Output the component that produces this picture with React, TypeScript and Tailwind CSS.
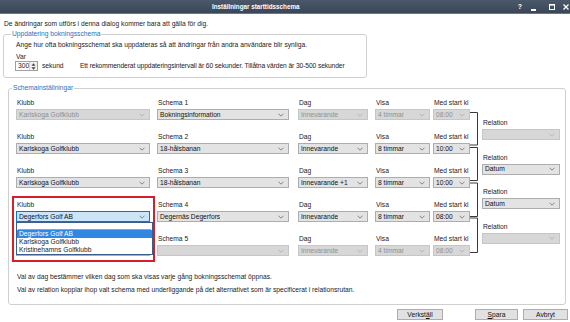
import React from "react";

type SelProps = { value?: string; w: string; disabled?: boolean; focused?: boolean };

function Chevron({ color }: { color: string }) {
  return (
    <svg width="6" height="4" viewBox="0 0 6 4" className="shrink-0">
      <path d="M0.5 0.7 L3 3.2 L5.5 0.7" fill="none" stroke={color} strokeWidth="0.7" />
    </svg>
  );
}

function Select({ value = "", w, disabled, focused }: SelProps) {
  const cls = disabled
    ? "bg-[#d7d7d7] border-[#c6c6c6] text-[#909090]"
    : focused
    ? "bg-[#cce4f7] border-[#0078d7] text-[#111]"
    : "bg-[#e3e3e3] border-[#adadad] text-[#111]";
  return (
    <div className={`${w} h-[11px] border flex items-center pl-[2px] pr-[4px] ${cls}`}>
      <span className="whitespace-nowrap overflow-hidden">{value}</span>
      <span className="ml-auto" />
      <Chevron color={disabled ? "#a8a8a8" : "#5a5a5a"} />
    </div>
  );
}

function Field({ label, children, w, hideLabel }: { label: string; children: React.ReactNode; w: string; hideLabel?: boolean }) {
  return (
    <div className={`${w} flex flex-col gap-[2px]`}>
      <span className={`pl-[1px] whitespace-nowrap ${hideLabel ? "invisible" : ""}`}>{label}</span>
      {children}
    </div>
  );
}

type Row = {
  schema: string;
  klubb: string;
  schemaVal: string;
  dag: string;
  visa: string;
  kl: string;
  disabled?: boolean;
  focused?: boolean;
  klubbDisabled?: boolean;
  open?: boolean;
  covered?: boolean;
};

const rows: Row[] = [
  { schema: "Schema 1", klubb: "Karlskoga Golfklubb", schemaVal: "Bokningsinformation", dag: "Innevarande", visa: "4 timmar", kl: "08:00", disabled: true, klubbDisabled: true },
  { schema: "Schema 2", klubb: "Karlskoga Golfklubb", schemaVal: "18-hålsbanan", dag: "Innevarande", visa: "8 timmar", kl: "10:00" },
  { schema: "Schema 3", klubb: "Karlskoga Golfklubb", schemaVal: "18-hålsbanan", dag: "Innevarande +1", visa: "8 timmar", kl: "10:00" },
  { schema: "Schema 4", klubb: "Degerfors Golf AB", schemaVal: "Degernäs  Degerfors", dag: "Innevarande", visa: "8 timmar", kl: "08:00", focused: true, open: true },
  { schema: "Schema 5", klubb: "", schemaVal: "", dag: "Innevarande", visa: "4 timmar", kl: "08:00", disabled: true, covered: true },
];

const relations = [
  { value: "", disabled: true },
  { value: "Datum" },
  { value: "Datum" },
  { value: "", disabled: true },
];

function Button({ children, w }: { children: React.ReactNode; w: string }) {
  return (
    <div className={`${w} h-[11px] border border-[#adadad] bg-[#e1e1e1] flex items-center justify-center text-[#111]`}>
      {children}
    </div>
  );
}

export default function App() {
  const brackets: [number, number][] = [
    [13.5, 46],
    [48.5, 81.5],
    [84, 117.5],
    [119, 153.5],
  ];
  return (
    <div className="relative w-[570px] h-[322px] bg-white overflow-hidden text-[6.7px] leading-[8px] text-[#1b1b1b] font-['Liberation_Sans',sans-serif]">
      {/* Title bar */}
      <div className="h-[14px] flex items-center bg-gradient-to-b from-[#4b586a] to-[#3a4759] border-b border-[#6b7787] text-white">
        <span className="ml-[212px] font-bold text-[6.3px] whitespace-nowrap">Inställningar starttidsschema</span>
        <div className="ml-auto flex items-center h-full">
          <span className="w-[10px] text-center font-bold text-[7px]">?</span>
          <span className="ml-[3px] w-[10px] flex justify-center items-end h-[8px]">
            <span className="block w-[5px] h-[1.5px] bg-white" />
          </span>
          <svg width="10" height="8" viewBox="0 0 10 8" className="ml-[9px]">
            <rect x="2.5" y="1.5" width="5" height="5" fill="none" stroke="white" strokeWidth="1" />
            <line x1="2.5" y1="2" x2="7.5" y2="2" stroke="white" strokeWidth="1.2" />
          </svg>
          <svg width="10" height="8" viewBox="0 0 10 8" className="ml-[4px] mr-[-1px]">
            <path d="M2.5 1.5 L7.5 6.5 M7.5 1.5 L2.5 6.5" stroke="white" strokeWidth="1.3" />
          </svg>
        </div>
      </div>

      {/* Intro */}
      <div className="mt-[5.5px] ml-[4px] whitespace-nowrap">De ändringar som utförs i denna dialog kommer bara att gälla för dig.</div>

      {/* Group 1 */}
      <div className="relative mt-[6px] ml-[3px] w-[364px] h-[44px] border border-[#cfcfcf] rounded-[3px] pl-[12px] pt-[6px]">
        <span className="absolute left-[7px] top-[-4.5px] bg-white px-[1px] text-[#2f6fb5] whitespace-nowrap">Uppdatering bokningsschema</span>
        <div className="whitespace-nowrap">Ange hur ofta bokningsschemat ska uppdateras så att ändringar från andra användare blir synliga.</div>
        <div className="mt-[4.5px]">Var</div>
        <div className="flex items-center h-[10px]">
          <div className="w-[23px] h-[10px] border border-[#a0a0a0] bg-white flex items-center -ml-[1px]">
            <span className="pl-[2px]">300</span>
            <div className="ml-auto w-[8px] h-full border-l border-[#d0d0d0] bg-[#f0f0f0] flex flex-col items-center justify-center gap-[1px]">
              <svg width="5" height="3" viewBox="0 0 5 3"><path d="M0.5 2.7 L2.5 0.3 L4.5 2.7 Z" fill="#444" /></svg>
              <svg width="5" height="3" viewBox="0 0 5 3"><path d="M0.5 0.3 L2.5 2.7 L4.5 0.3 Z" fill="#444" /></svg>
            </div>
          </div>
          <span className="ml-[4px] w-[38px] whitespace-nowrap">sekund</span>
          <span className="whitespace-nowrap tracking-[-0.1px]">Ett rekommenderat uppdateringsintervall är 60 sekunder. Tillåtna värden är 30-500 sekunder</span>
        </div>
      </div>

      {/* Group 2 */}
      <div className="relative mt-[10px] ml-[8px] w-[558px] h-[217px] border border-[#cfcfcf] rounded-[3px] pl-[7px] pt-[10.5px]">
        <span className="absolute left-[3px] top-[-4.5px] bg-white px-[1px] text-[#2f6fb5] whitespace-nowrap">Schemainställningar</span>
        <div className="flex">
          <div className="flex flex-col gap-[13px]">
            {rows.map((r, i) => (
              <div key={i} className="flex">
                <div className="relative">
                  <Field label="Klubb" w="w-[134px]" hideLabel={r.covered}>
                    <Select w="w-[134px]" value={r.klubb} disabled={r.klubbDisabled} focused={r.focused} />
                  </Field>
                  {r.open && (
                    <div className="absolute left-0 top-full w-[137px] bg-white border border-[#3a5f8f] z-10 flex flex-col">
                      <div className="h-[7px] border-b border-[#a0a0a0] mx-[1px]" />
                      <div className="h-[8px] bg-[#3088e3] text-white pl-[2px] whitespace-nowrap">Degerfors Golf AB</div>
                      <div className="h-[8px] pl-[2px] whitespace-nowrap">Karlskoga Golfklubb</div>
                      <div className="h-[8px] pl-[2px] whitespace-nowrap">Kristinehamns Golfklubb</div>
                    </div>
                  )}
                </div>
                <div className="ml-[7px]">
                  <Field label={r.schema} w="w-[132px]">
                    <Select w="w-[132px]" value={r.schemaVal} disabled={r.disabled && i === 4} />
                  </Field>
                </div>
                <div className="ml-[9px]">
                  <Field label="Dag" w="w-[70px]">
                    <Select w="w-[70px]" value={r.dag} disabled={r.disabled} />
                  </Field>
                </div>
                <div className="ml-[7px]">
                  <Field label="Visa" w="w-[55px]">
                    <Select w="w-[55px]" value={r.visa} disabled={r.disabled} />
                  </Field>
                </div>
                <div className="ml-[3px]">
                  <Field label="Med start kl" w="w-[37px]">
                    <Select w="w-[37px]" value={r.kl} disabled={r.disabled} />
                  </Field>
                </div>
              </div>
            ))}
          </div>
          <svg width="12" height="157" viewBox="0 0 12 157" className="shrink-0">
            {brackets.map(([a, b], i) => (
              <path key={i} d={`M0 ${a} H7.5 V${b} H0`} fill="none" stroke="#3a3a3a" strokeWidth="1" />
            ))}
          </svg>
          <div className="flex flex-col pt-[20px] gap-[13.5px]">
            {relations.map((rel, i) => (
              <Field key={i} label="Relation" w="w-[78px]">
                <Select w="w-[78px]" value={rel.value} disabled={rel.disabled} />
              </Field>
            ))}
          </div>
        </div>
        <div className="mt-[17px] ml-[1px] whitespace-nowrap">Val av dag bestämmer vilken dag som ska visas varje gång bokningsschemat öppnas.</div>
        <div className="mt-[5px] ml-[1px] whitespace-nowrap">Val av relation kopplar ihop valt schema med underliggande på det alternativet som är specificerat i relationsrutan.</div>
      </div>

      {/* Buttons */}
      <div className="mt-[4.5px] flex justify-end pr-[2px]">
        <Button w="w-[46px]">
          <span>
            Verkst<span className="underline">ä</span>ll
          </span>
        </Button>
        <div className="ml-[32px]">
          <Button w="w-[43px]">
            <span>
              <span className="underline">S</span>para
            </span>
          </Button>
        </div>
        <div className="ml-[5px]">
          <Button w="w-[45px]">Avbryt</Button>
        </div>
      </div>

      {/* Red highlight frame */}
      <div className="absolute left-[12px] top-[196px] w-[143px] h-[66px] border-2 border-[#d4202a] pointer-events-none" />
    </div>
  );
}
